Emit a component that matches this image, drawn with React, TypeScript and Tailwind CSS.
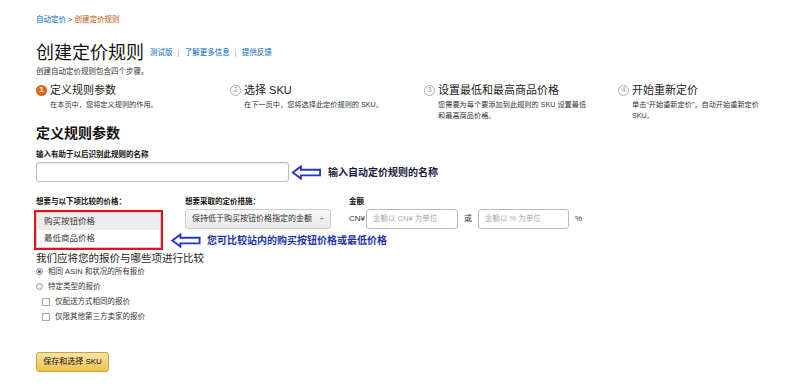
import React from 'react';

const cjk = { fontFamily: '"Liberation Sans", "Noto Sans CJK SC", sans-serif' };

const LeftArrow: React.FC<{ className?: string }> = ({ className }) => (
  <svg viewBox="0 0 32 16" className={className}>
    <path d="M1.5 8 L10 1.5 L10 5 L30.5 5 L30.5 11 L10 11 L10 14.5 Z" fill="#fff" stroke="#2436c4" strokeWidth="2" strokeLinejoin="miter" />
  </svg>
);

const steps = [
  { n: '1', title: '定义规则参数', desc: ['在本页中，您将定义规则的作用。'], active: true },
  { n: '2', title: '选择 SKU', desc: ['在下一页中，您将选择此定价规则的 SKU。'], active: false },
  { n: '3', title: '设置最低和最高商品价格', desc: ['您需要为每个要添加到此规则的 SKU 设置最低', '和最高商品价格。'], active: false },
  { n: '4', title: '开始重新定价', desc: ['单击“开始重新定价”，自动开始重新定价', 'SKU。'], active: false },
];

export default function App() {
  return (
    <div className="w-[801px] h-[392px] bg-white text-[#111] relative overflow-hidden" style={cjk}>
      <div className="pl-[36px] pt-[15px]">
        {/* breadcrumb */}
        <div className="text-[7.5px] leading-[10px] h-[10px]">
          <span className="text-[#0066c0]">自动定价</span>
          <span className="text-[#555]"> &gt; </span>
          <span className="text-[#c45500]">创建定价规则</span>
        </div>

        {/* title */}
        <div className="flex items-end mt-[16px] h-[24px]">
          <span className="text-[18px] leading-[24px] text-[#111]">创建定价规则</span>
          <span className="ml-[6px] mb-[7px] text-[7.5px] leading-[10px] text-[#0066c0]">
            测试版 <span className="text-[#999] mx-[3px]">|</span> 了解更多信息 <span className="text-[#999] mx-[3px]">|</span> 提供反馈
          </span>
        </div>
        <div className="text-[7.5px] leading-[10px] mt-[2px] text-[#333]">创建自动定价规则包含四个步骤。</div>

        {/* steps */}
        <div className="grid grid-cols-[194px_194px_194px_170px] mt-[5px]">
          {steps.map((s) => (
            <div key={s.n}>
              <div className="flex items-center h-[16px]">
                {s.active ? (
                  <span className="w-[11px] h-[11px] rounded-full bg-[#d9681b] text-white text-[8px] font-bold leading-none flex items-center justify-center">
                    {s.n}
                  </span>
                ) : (
                  <span className="w-[11px] h-[11px] rounded-full border border-[#aaa] text-[#999] text-[7.5px] leading-none flex items-center justify-center">
                    {s.n}
                  </span>
                )}
                <span className="ml-[3px] text-[11px] leading-[16px] text-[#222]">{s.title}</span>
              </div>
              <div className="pl-[14px] mt-[1px] text-[7.2px] leading-[11px] text-[#333]">
                {s.desc.map((d) => (
                  <div key={d}>{d}</div>
                ))}
              </div>
            </div>
          ))}
        </div>

        {/* section */}
        <div className="text-[14px] font-bold leading-[18px] mt-[3px]">定义规则参数</div>
        <div className="text-[7.5px] font-bold leading-[10px] mt-[8px]">输入有助于以后识别此规则的名称</div>
        <div className="flex items-center mt-[2px] h-[20px]">
          <div className="w-[253px] h-[20px] border border-[#bbb] rounded-[3px] shadow-[inset_0_1px_1px_rgba(0,0,0,0.08)]" />
          <LeftArrow className="w-[31px] h-[15px] ml-[2px]" />
          <span className="ml-[6px] text-[10px] font-bold text-[#1a1a40]">输入自动定价规则的名称</span>
        </div>

        {/* pricing row */}
        <div className="flex mt-[15px]">
          <div className="w-[149px]">
            <div className="text-[7.5px] font-bold leading-[10px]">想要与以下项比较的价格：</div>
            <div className="mt-[3px] w-[129px] border-2 border-[#e0141e] -ml-[2px]">
              <div className="border border-[#ccc] bg-white">
                <div className="h-[17px] bg-[#ececec] text-[8.5px] leading-[17px] pl-[7px] text-[#333]">购买按钮价格</div>
                <div className="h-[17px] text-[8.5px] leading-[17px] pl-[7px] text-[#333]">最低商品价格</div>
              </div>
            </div>
          </div>
          <div className="w-[164px]">
            <div className="text-[7.5px] font-bold leading-[10px]">想要采取的定价措施：</div>
            <div className="mt-[2px] w-[146px] h-[20px] border border-[#ccc] rounded-[3px] bg-gradient-to-b from-[#f9f9f9] to-[#e9e9e9] flex items-center justify-between px-[6px] text-[8px] text-[#333]">
              <span>保持低于购买按钮价格指定的金额</span>
              <span className="text-[#555]">÷</span>
            </div>
          </div>
          <div>
            <div className="text-[7.5px] font-bold leading-[10px]">金额</div>
            <div className="flex items-center mt-[2px] h-[20px] text-[8px] text-[#333]">
              <span className="w-[17px]">CN¥</span>
              <div className="w-[92px] h-[20px] border border-[#bbb] rounded-[3px] flex items-center px-[6px] text-[#aaa] text-[7.5px]">金额以 CN¥ 为单位</div>
              <span className="mx-[6px]">或</span>
              <div className="w-[91px] h-[20px] border border-[#bbb] rounded-[3px] flex items-center px-[6px] text-[#aaa] text-[7.5px]">金额以 % 为单位</div>
              <span className="ml-[6px]">%</span>
            </div>
          </div>
        </div>

        {/* compare */}
        <div className="text-[10.5px] leading-[14px] mt-[1px] text-[#222]">我们应将您的报价与哪些项进行比较</div>
        <div className="-mt-[1px] text-[7.5px] text-[#333]">
          <div className="flex items-center h-[15px]">
            <span className="w-[7px] h-[7px] rounded-full border border-[#888] bg-[#eef2f7] flex items-center justify-center">
              <span className="w-[3px] h-[3px] rounded-full bg-[#2b5a96]" />
            </span>
            <span className="ml-[5px]">相同 ASIN 和状况的所有报价</span>
          </div>
          <div className="flex items-center h-[15px]">
            <span className="w-[7px] h-[7px] rounded-full border border-[#999] bg-[#f0f0f0]" />
            <span className="ml-[5px]">特定类型的报价</span>
          </div>
          <div className="flex items-center h-[15px] pl-[6px]">
            <span className="w-[8px] h-[8px] border border-[#aaa] bg-white" />
            <span className="ml-[5px]">仅配送方式相同的报价</span>
          </div>
          <div className="flex items-center h-[15px] pl-[6px]">
            <span className="w-[8px] h-[8px] border border-[#aaa] bg-white" />
            <span className="ml-[5px]">仅限其他第三方卖家的报价</span>
          </div>
        </div>

        <button className="mt-[28px] w-[73px] h-[20px] rounded-[3px] border border-[#c9a33b] bg-gradient-to-b from-[#f8e3a4] to-[#f0c14b] text-[8px] text-[#111] flex items-center justify-center">
          保存和选择 SKU
        </button>
      </div>

      {/* annotation over pricing row */}
      <div className="absolute left-[170px] top-[233px] flex items-center">
        <LeftArrow className="w-[32px] h-[15px]" />
        <span className="ml-[5px] text-[10px] font-bold text-[#2233a8]">您可比较站内的购买按钮价格或最低价格</span>
      </div>
    </div>
  );
}
